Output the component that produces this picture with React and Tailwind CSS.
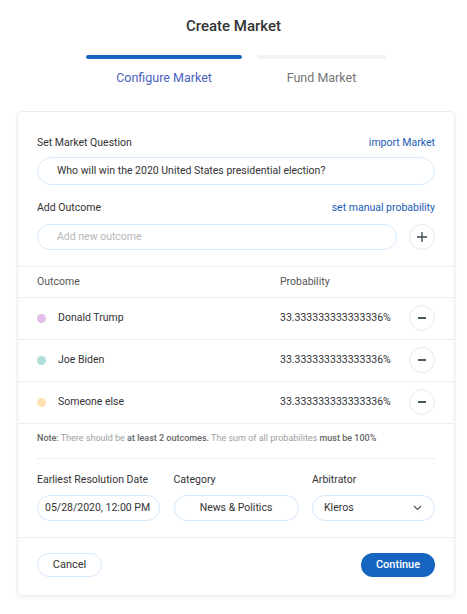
import React, { useState } from 'react'

const outcomes = [
  { name: 'Donald Trump', color: 'bg-[#e1bee7]' },
  { name: 'Joe Biden', color: 'bg-[#b2dfdb]' },
  { name: 'Someone else', color: 'bg-[#ffe0b2]' },
]

const pill = 'h-[26px] rounded-full border border-[#d6e8fb] bg-white text-[10.5px] text-[#333] outline-none'

function CircleButton({ children }) {
  return (
    <button type="button" className="w-[26px] h-[26px] shrink-0 rounded-full border border-[#e8e8f0] bg-white flex items-center justify-center text-[#37474f]">
      {children}
    </button>
  )
}

export default function App() {
  const [question, setQuestion] = useState('Who will win the 2020 United States presidential election?')
  const [outcome, setOutcome] = useState('')

  return (
    <div className="min-h-screen bg-white font-['Roboto',sans-serif] text-[#333]">
      <h1 className="text-center text-[15px] font-medium pt-[15px] h-[55px]">Create Market</h1>

      <div className="flex justify-center gap-[15px] ml-[5px]">
        <div className="w-[156px] flex flex-col items-center">
          <div className="h-[4px] w-full rounded-full bg-[#1a65c4]" />
          <span className="mt-[10px] text-[12.5px] text-[#4a62c0]">Configure Market</span>
        </div>
        <div className="w-[129px] flex flex-col items-center">
          <div className="h-[4px] w-full rounded-full bg-[#f3f3f3]" />
          <span className="mt-[10px] text-[12.5px] text-[#757575]">Fund Market</span>
        </div>
      </div>

      <div className="mx-[17px] mt-[23px] w-[438px] rounded-[5px] border border-[#ececec] shadow-[0_2px_4px_rgba(0,0,0,0.06)]">
        <div className="px-[19px] pt-[24px] pb-[16px]">
          <div className="flex justify-between text-[10.5px] leading-[14px]">
            <span>Set Market Question</span>
            <span className="text-[#1a5cb4]">import Market</span>
          </div>
          <input value={question} onChange={e => setQuestion(e.target.value)} className={`${pill} w-full mt-[7px] h-[28px] px-[19px]`} />

          <div className="flex justify-between text-[10.5px] leading-[14px] mt-[16px]">
            <span>Add Outcome</span>
            <span className="text-[#1a5cb4]">set manual probability</span>
          </div>
          <div className="flex items-center gap-[12px] mt-[9px]">
            <input value={outcome} onChange={e => setOutcome(e.target.value)} placeholder="Add new outcome" className={`${pill} flex-1 px-[19px] placeholder-[#b8b8b8]`} />
            <CircleButton>
              <svg width="12" height="12" viewBox="0 0 12 12"><path d="M6 1v10M1 6h10" stroke="currentColor" strokeWidth="1.3" /></svg>
            </CircleButton>
          </div>
        </div>

        <div className="border-t border-[#eeeeee]">
          <div className="flex items-center h-[30px] px-[19px] text-[10.5px] text-[#555]">
            <span className="w-[243px]">Outcome</span>
            <span>Probability</span>
          </div>
          {outcomes.map(o => (
            <div key={o.name} className="flex items-center h-[42px] px-[19px] border-t border-[#eeeeee] text-[10.5px]">
              <div className="w-[243px] flex items-center">
                <span className={`w-[9px] h-[9px] rounded-full ${o.color} mr-[12px] mt-[1px]`} />
                <span>{o.name}</span>
              </div>
              <span className="flex-1">33.333333333333336%</span>
              <CircleButton>
                <svg width="10" height="10" viewBox="0 0 10 10"><path d="M1 5h8" stroke="currentColor" strokeWidth="1.8" /></svg>
              </CircleButton>
            </div>
          ))}
        </div>

        <div className="border-t border-[#eeeeee] px-[19px]">
          <p className="pt-[8px] text-[9px] text-[#9e9e9e] leading-[12px]">
            <span className="font-medium text-[#666]">Note:</span> There should be <span className="font-medium text-[#666]">at least 2 outcomes.</span> The sum of all probabilites <span className="font-medium text-[#666]">must be 100%</span>
          </p>
          <div className="border-t border-[#eeeeee] mt-[14px] pt-[14px] pb-[16px] grid grid-cols-[123px_125px_123px] justify-between">
            <div>
              <div className="text-[10.5px] leading-[14px]">Earliest Resolution Date</div>
              <div className={`${pill} mt-[8px] flex items-center px-[7px] whitespace-nowrap`}>05/28/2020, 12:00 PM</div>
            </div>
            <div>
              <div className="text-[10.5px] leading-[14px]">Category</div>
              <div className={`${pill} mt-[8px] h-[24px] flex items-center justify-center`}>News &amp; Politics</div>
            </div>
            <div>
              <div className="text-[10.5px] leading-[14px]">Arbitrator</div>
              <div className={`${pill} mt-[8px] flex items-center justify-between pl-[11px] pr-[12px]`}>
                <span>Kleros</span>
                <svg width="9" height="6" viewBox="0 0 9 6"><path d="M1 1l3.5 3.5L8 1" fill="none" stroke="#555" strokeWidth="1.2" /></svg>
              </div>
            </div>
          </div>
        </div>

        <div className="border-t border-[#eeeeee] px-[19px] pt-[15px] pb-[18px] flex justify-between">
          <button type="button" className="h-[24px] w-[65px] rounded-full border border-[#d6e8fb] text-[11px] text-[#333]">Cancel</button>
          <button type="button" className="h-[24px] w-[74px] rounded-full bg-[#1565c0] text-[11px] font-medium text-white">Continue</button>
        </div>
      </div>
    </div>
  )
}
